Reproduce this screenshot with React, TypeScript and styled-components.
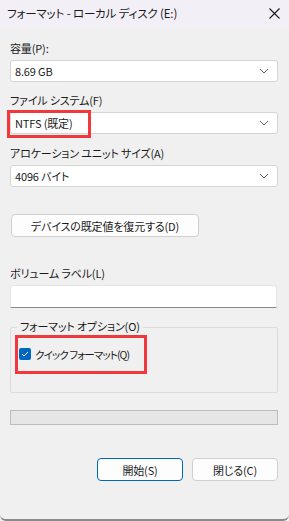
import React from "react";
import styled, { createGlobalStyle } from "styled-components";

const GlobalStyle = createGlobalStyle`
  html, body {
    margin: 0;
    padding: 0;
    background: #f0f0f0;
  }
  * {
    box-sizing: border-box;
  }
`;

const Window = styled.div`
  width: 289px;
  height: 521px;
  display: flex;
  flex-direction: column;
  background: #f0f0f0;
  font-family: "Noto Sans CJK JP", "Noto Sans", sans-serif;
  font-size: 11px;
  font-feature-settings: "palt";
  letter-spacing: -0.15px;
  color: #1a1a1a;
  border-bottom: 2px solid #8a8a8a;
  border-radius: 0 0 6px 6px;
  overflow: hidden;
`;

const TitleBar = styled.div`
  height: 28px;
  flex: none;
  display: flex;
  align-items: center;
  justify-content: space-between;
  padding: 0 9px 2px 7px;
  background: #f3eff6;
  font-size: 11.5px;
  color: #1a1a1a;
`;

const CloseIcon = styled.svg`
  width: 11px;
  height: 11px;
`;

const Body = styled.div`
  display: flex;
  flex-direction: column;
  padding: 0 11px 0 10px;
`;

const Label = styled.div<{ $top: number }>`
  height: 16px;
  line-height: 16px;
  margin-top: ${(p) => p.$top}px;
  margin-bottom: 4px;
`;

const Field = styled.div`
  position: relative;
`;

const Combo = styled.div`
  height: 22px;
  display: flex;
  align-items: center;
  justify-content: space-between;
  padding: 0 8px 0 4px;
  background: #ffffff;
  border: 1px solid #d5d5d5;
  border-radius: 3px;
`;

const Chevron = styled.svg`
  width: 10px;
  height: 6px;
`;

const Highlight = styled.div<{ $l: number; $t: number; $w: number; $h: number }>`
  position: absolute;
  left: ${(p) => p.$l}px;
  top: ${(p) => p.$t}px;
  width: ${(p) => p.$w}px;
  height: ${(p) => p.$h}px;
  border: 3px solid #f0393d;
  pointer-events: none;
`;

const Button = styled.button<{ $primary?: boolean; $width: number }>`
  width: ${(p) => p.$width}px;
  height: 23px;
  padding: 0;
  background: #fdfdfd;
  border: 1px solid ${(p) => (p.$primary ? "#0067c0" : "#d0d0d0")};
  border-radius: 4px;
  font-family: inherit;
  font-size: 11px;
  font-feature-settings: "palt";
  letter-spacing: -0.15px;
  color: #1a1a1a;
`;

const ResetButton = styled(Button)`
  margin: 27px 0 0 1px;
`;

const TextInput = styled.div`
  height: 23px;
  margin-right: 1px;
  background: #ffffff;
  border: 1px solid #e5e5e5;
  border-bottom: 1px solid #8a8a8a;
  border-radius: 3px 3px 0 0;
`;

const GroupSlot = styled(Field)`
  margin-top: 11px;
`;

const Group = styled.fieldset`
  margin: 0;
  height: 74px;
  padding: 0;
  border: 1px solid #dcdcdc;
  border-radius: 2px;
`;

const Legend = styled.legend`
  margin-left: 6px;
  padding: 0 3px;
  height: 16px;
  line-height: 15px;
`;

const CheckRow = styled.div`
  display: flex;
  align-items: center;
  gap: 4px;
  margin: 11px 0 0 8px;
  height: 16px;
`;

const CheckText = styled.span`
  font-size: 10.5px;
  letter-spacing: -0.9px;
  white-space: nowrap;
`;

const CheckBox = styled.div`
  width: 12px;
  height: 12px;
  flex: none;
  border-radius: 2px;
  background: #0067c0;
  display: flex;
  align-items: center;
  justify-content: center;
`;

const Progress = styled.div`
  height: 15px;
  margin-top: 17px;
  background: #e6e6e6;
  border: 1px solid #bcbcbc;
`;

const Footer = styled.div`
  display: flex;
  justify-content: flex-end;
  gap: 9px;
  margin-top: 33px;
`;

const ChevronIcon = () => (
  <Chevron viewBox="0 0 10 6">
    <path d="M1 1l4 4 4-4" fill="none" stroke="#5f5f5f" strokeWidth="1" />
  </Chevron>
);

const App: React.FC = () => {
  return (
    <>
      <GlobalStyle />
      <Window>
        <TitleBar>
          <span>フォーマット - ローカル ディスク (E:)</span>
          <CloseIcon viewBox="0 0 11 11">
            <path d="M0.5 0.5l10 10M10.5 0.5l-10 10" stroke="#1a1a1a" strokeWidth="1.1" />
          </CloseIcon>
        </TitleBar>
        <Body>
          <Label $top={12}>容量(P):</Label>
          <Combo>
            <span>8.69 GB</span>
            <ChevronIcon />
          </Combo>

          <Label $top={10}>ファイル システム(F)</Label>
          <Field>
            <Combo>
              <span>NTFS (既定)</span>
              <ChevronIcon />
            </Combo>
            <Highlight $l={-3} $t={-2} $w={84} $h={28} />
          </Field>

          <Label $top={11}>アロケーション ユニット サイズ(A)</Label>
          <Combo>
            <span>4096 バイト</span>
            <ChevronIcon />
          </Combo>

          <ResetButton $width={188}>デバイスの既定値を復元する(D)</ResetButton>

          <Label $top={28}>ボリューム ラベル(L)</Label>
          <TextInput />

          <GroupSlot>
            <Group>
              <Legend>フォーマット オプション(O)</Legend>
              <CheckRow>
                <CheckBox>
                  <svg width="8" height="6" viewBox="0 0 8 6">
                    <path d="M1 3l2 2 4-4" fill="none" stroke="#ffffff" strokeWidth="1" />
                  </svg>
                </CheckBox>
                <CheckText>クイック フォーマット(Q)</CheckText>
              </CheckRow>
            </Group>
            <Highlight $l={5} $t={16} $w={132} $h={39} />
          </GroupSlot>

          <Progress />

          <Footer>
            <Button $primary $width={86}>開始(S)</Button>
            <Button $width={86}>閉じる(C)</Button>
          </Footer>
        </Body>
      </Window>
    </>
  );
};

export default App;
